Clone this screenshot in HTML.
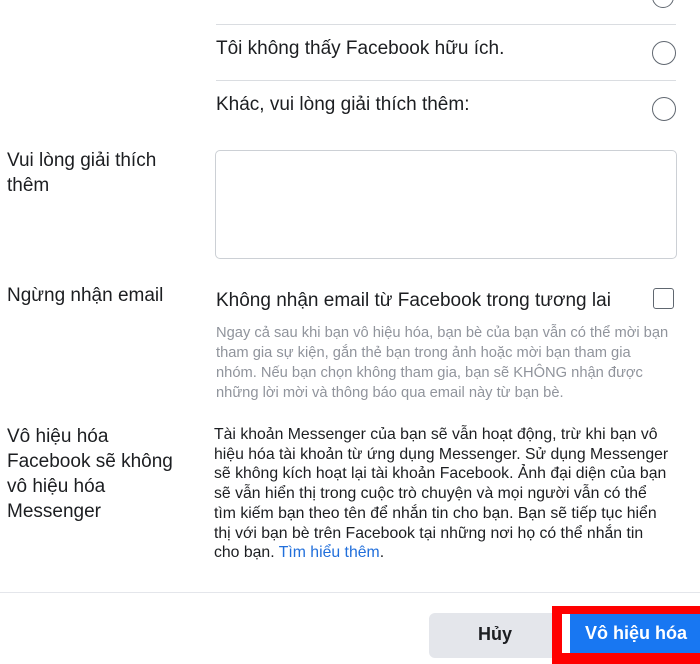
<!DOCTYPE html>
<html><head><meta charset="utf-8"><style>
body{margin:0;width:700px;height:664px;background:#fff;position:relative;overflow:hidden;font-family:"Liberation Sans",sans-serif;color:#1c1e21}
.a{position:absolute;white-space:nowrap}
.l{font-size:19px}
.hr{position:absolute;height:1px;background:#dadde1}
.r{position:absolute;width:22px;height:22px;border:1.5px solid #606770;border-radius:50%;box-sizing:border-box}
.g{color:#90949c;font-size:14.7px;line-height:20px}
.m{font-size:15.8px;line-height:19.7px}
</style></head><body>
<div class="r" style="left:652px;top:-14px"></div>
<div class="hr" style="left:216px;top:24px;width:460px"></div>
<div class="a l" style="left:216px;top:38px">Tôi không thấy Facebook hữu ích.</div>
<div class="r" style="left:652px;top:41px;width:24px;height:24px"></div>
<div class="hr" style="left:216px;top:80px;width:460px"></div>
<div class="a l" style="left:216px;top:94px">Khác, vui lòng giải thích thêm:</div>
<div class="r" style="left:652px;top:97px;width:24px;height:24px"></div>

<div class="a l" style="left:7px;top:148px;line-height:25px">Vui lòng giải thích<br>thêm</div>
<div style="position:absolute;left:215px;top:150px;width:462px;height:109px;border:1px solid #ccd0d5;border-radius:5px;box-sizing:border-box"></div>

<div class="a l" style="left:7px;top:285px">Ngừng nhận email</div>
<div class="a l" style="left:216px;top:290px">Không nhận email từ Facebook trong tương lai</div>
<div style="position:absolute;left:653px;top:288px;width:21px;height:21px;border:1.5px solid #606770;border-radius:3px;box-sizing:border-box"></div>
<div class="a g" style="left:216px;top:323px">Ngay cả sau khi bạn vô hiệu hóa, bạn bè của bạn vẫn có thể mời bạn<br>tham gia sự kiện, gắn thẻ bạn trong ảnh hoặc mời bạn tham gia<br>nhóm. Nếu bạn chọn không tham gia, bạn sẽ KHÔNG nhận được<br>những lời mời và thông báo qua email này từ bạn bè.</div>

<div class="a l" style="left:7px;top:424px;line-height:25px">Vô hiệu hóa<br>Facebook sẽ không<br>vô hiệu hóa<br>Messenger</div>
<div class="a m" style="left:214px;top:425px">Tài khoản Messenger của bạn sẽ vẫn hoạt động, trừ khi bạn vô<br>hiệu hóa tài khoản từ ứng dụng Messenger. Sử dụng Messenger<br>sẽ không kích hoạt lại tài khoản Facebook. Ảnh đại diện của bạn<br>sẽ vẫn hiển thị trong cuộc trò chuyện và mọi người vẫn có thể<br>tìm kiếm bạn theo tên để nhắn tin cho bạn. Bạn sẽ tiếp tục hiển<br>thị với bạn bè trên Facebook tại những nơi họ có thể nhắn tin<br>cho bạn. <span style="color:#216fdb">Tìm hiểu thêm</span>.</div>

<div class="hr" style="left:0;top:592px;width:700px;background:#e4e6eb"></div>
<div style="position:absolute;left:429px;top:613px;width:130px;height:45px;background:#e4e6eb;border-radius:6px"></div>
<div class="a" style="left:478px;top:624px;font-size:18px;font-weight:bold">Hủy</div>
<div style="position:absolute;left:552px;top:606px;width:148px;height:58px;background:#f00"></div>
<div style="position:absolute;left:562px;top:614px;width:138px;height:39px;background:#fff"></div>
<div style="position:absolute;left:570px;top:614px;width:130px;height:39px;background:#1877f2"></div>
<div class="a" style="left:585px;top:623px;font-size:18px;font-weight:bold;color:#fff">Vô hiệu hóa</div>
</body></html>
